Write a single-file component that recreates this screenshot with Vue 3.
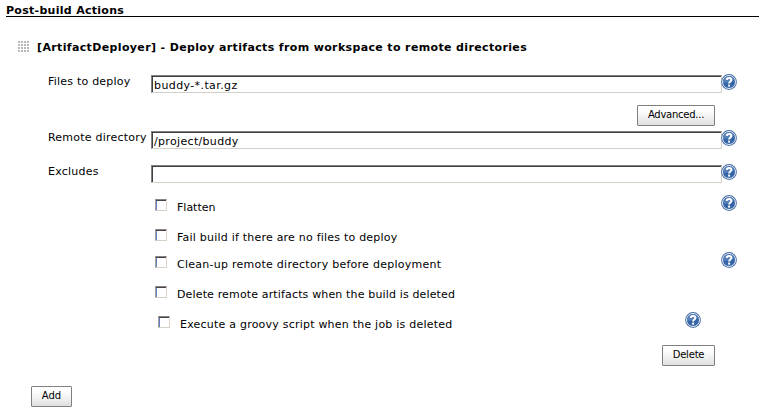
<script setup>
import { ref, h } from 'vue'

const fields = ref([
  { label: 'Files to deploy', value: 'buddy-*.tar.gz', cls: 'files', advanced: true },
  { label: 'Remote directory', value: '/project/buddy', cls: 'remote' },
  { label: 'Excludes', value: '', cls: 'excludes' },
])

const options = ref([
  { label: 'Flatten', checked: false, help: true, cls: 'flatten' },
  { label: 'Fail build if there are no files to deploy', checked: false, cls: 'fail' },
  { label: 'Clean-up remote directory before deployment', checked: false, help: true, cls: 'clean' },
  { label: 'Delete remote artifacts when the build is deleted', checked: false, cls: 'remove' },
  { label: 'Execute a groovy script when the job is deleted', checked: false, help: true, cls: 'groovy' },
])

const HelpIcon = () =>
  h('svg', { viewBox: '0 0 16 16', width: 16, height: 16, role: 'img' }, [
    h('circle', { cx: 8, cy: 8, r: 7.9, fill: '#4a70a8' }),
    h('circle', { cx: 8, cy: 8, r: 6.5, fill: '#3565a6', stroke: '#e4ecf6', 'stroke-width': 1 }),
    h('path', { d: 'M2.2 8.6A5.9 5.9 0 0 1 13.2 5.2Q10 9.2 2.2 8.6Z', fill: '#7396c6', opacity: 0.55 }),
    h('path', { d: 'M5.7 5.9C5.8 3.3 10.4 3.3 10.4 5.9C10.4 7.5 8.1 7.4 8.1 9.5', fill: 'none', stroke: '#fff', 'stroke-width': 1.9 }),
    h('rect', { x: 7.1, y: 10.6, width: 2, height: 2, fill: '#fff' }),
  ])
</script>

<template>
  <main class="page">
    <h2 class="section"><span>Post-build Actions</span></h2>
    <header class="title">
      <i class="grip"></i>
      <h3>[ArtifactDeployer] - Deploy artifacts from workspace to remote directories</h3>
    </header>
    <template v-for="f in fields" :key="f.cls">
      <div class="field" :class="f.cls">
        <label :for="f.cls">{{ f.label }}</label>
        <input :id="f.cls" v-model="f.value" class="text" type="text" />
        <HelpIcon class="help" />
      </div>
      <div v-if="f.advanced" class="actions advanced">
        <button class="btn wide">Advanced...</button>
      </div>
    </template>
    <div v-for="o in options" :key="o.cls" class="option" :class="o.cls">
      <label><input v-model="o.checked" class="check" type="checkbox" /><span>{{ o.label }}</span></label>
      <HelpIcon v-if="o.help" class="help" />
    </div>
    <div class="actions delete"><button class="btn mid">Delete</button></div>
    <footer class="add"><button class="btn small">Add</button></footer>
  </main>
</template>

<style>
body { margin: 0; background: #fff; overflow: hidden; }
</style>

<style scoped>
.page {
  box-sizing: border-box;
  width: 765px;
  height: 413px;
  display: flex;
  flex-direction: column;
  color: #000;
  font: 11px/14px Verdana, "DejaVu Sans", sans-serif;
}
.section {
  box-sizing: border-box;
  height: 14px;
  margin: 3px 6px 0;
  border-bottom: 1px solid #000;
  font-size: 11px;
  line-height: 16px;
  letter-spacing: 0.29px;
  width: 753px;
}
.title {
  display: flex;
  height: 34px;
  margin-top: 23px;
  padding-left: 18px;
}
.grip {
  width: 12px;
  height: 12px;
  margin: 1px 7px 0 0;
  background: conic-gradient(from 0deg at 2px 2px, transparent 75%, #b9b9b9 0) 0 0 / 3px 3px;
}
h3 { margin: 0; font-size: 11px; line-height: 16px; letter-spacing: 0.36px; white-space: nowrap; }
.field { display: flex; align-items: flex-start; padding-left: 48px; height: 34px; }
.field.files, .field.excludes { height: 31px; }
.field label { width: 103px; line-height: 16px; letter-spacing: 0.22px; white-space: nowrap; }
.text {
  box-sizing: border-box;
  width: 571px;
  height: 18px;
  margin: 1px -1px 0 0;
  padding: 2px 1px 0;
  border: solid;
  border-width: 1px 1px 1px 1px;
  border-color: #808080 #d4d0c8 #d4d0c8 #808080;
  box-shadow: inset 1px 1px 0 #404040;
  padding: 3px 2px 0;
  border-radius: 0;
  outline: 0;
  background: #fff;
  color: #000;
  font: inherit;
  letter-spacing: 0.4px;
}
.remote .text { letter-spacing: 0.33px; }
.help { display: block; flex: none; }
.option { display: flex; justify-content: space-between; height: 30px; padding: 0 28px 0 155px; }
.option.fail { height: 27px; }
.option.groovy { height: 33px; padding: 0 64px 0 158px; }
.option label { display: flex; align-items: flex-start; white-space: nowrap; }
.option span { margin: 5px 0 0 10px; line-height: 16px; letter-spacing: 0.22px; }
.option.flatten span { letter-spacing: 0; }
.option.clean span { letter-spacing: 0.26px; }
.option.remove span { letter-spacing: 0.15px; }
.check {
  appearance: none;
  box-sizing: border-box;
  width: 12px;
  height: 12px;
  margin: 4px 0 0;
  border: 1px solid;
  border-color: #8a8484 #e4d4d0 #d4d0c8 #aaa29c;
  box-shadow: inset 0 1px 0 #46424a, inset 1px 0 0 #5f7fc4;
  border-radius: 0;
  background: #fff;
}
.check:checked { background: #333; }
.actions { display: flex; justify-content: flex-end; padding-right: 50px; }
.advanced { height: 25px; }
.delete { height: 41px; }
.add { padding-left: 31px; height: 21px; }
.btn {
  box-sizing: border-box;
  height: 21px;
  padding: 0 0 2px;
  border: 1px solid #808080;
  border-radius: 1px;
  background: linear-gradient(#fff 20%, #f3f3f3 55%, #dedede);
  color: #000;
  font: 10px/14px Verdana, "DejaVu Sans", sans-serif;
}
.wide { width: 78px; letter-spacing: -0.25px; }
.mid { width: 53px; letter-spacing: -0.2px; }
.small { display: block; width: 41px; }
</style>
